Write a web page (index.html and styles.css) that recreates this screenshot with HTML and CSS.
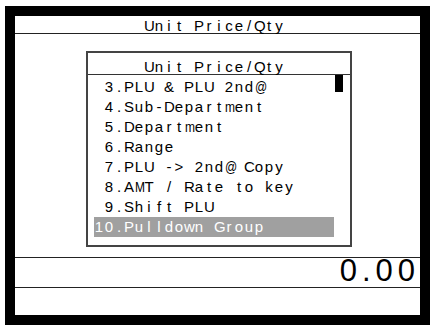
FILE: index.html
```html
<!DOCTYPE html>
<html>
<head>
<meta charset="utf-8">
<link rel="stylesheet" href="styles.css">
</head>
<body>
<div class="frame">
  <div class="title mono">Unit Price/Qty</div>
  <div class="middle">
    <div class="dialog">
      <div class="dlg-title mono">Unit Price/Qty</div>
      <div class="list">
        <div class="row mono"> 3.PLU &amp; PLU 2nd@</div>
        <div class="row mono"> 4.Sub-Department</div>
        <div class="row mono"> 5.Department</div>
        <div class="row mono"> 6.Range</div>
        <div class="row mono"> 7.PLU -&gt; 2nd@ Copy</div>
        <div class="row mono"> 8.AMT / Rate to key</div>
        <div class="row mono"> 9.Shift PLU</div>
        <div class="row mono selected">10.Pulldown Group</div>
      </div>
      <div class="scroll-thumb"></div>
    </div>
  </div>
  <div class="amount">0.00</div>
  <div class="status"></div>
</div>
<script src="script.js"></script>
</body>
</html>
```
FILE: styles.css
```css
html, body {
  margin: 0;
  padding: 0;
  background: #ffffff;
}
body {
  font-family: "Liberation Sans", Arial, sans-serif;
  color: #000000;
}
.frame {
  box-sizing: border-box;
  width: 425px;
  height: 319px;
  margin: 6px 0 0 5px;
  border: 10px solid #000000;
  display: flex;
  flex-direction: column;
  background: #ffffff;
}
.mono {
  font-size: 15px;
  white-space: pre;
}
.ch {
  display: inline-block;
  width: 10px;
  text-align: center;
}
.ch.wide {
  transform: scaleX(0.8);
}
.title {
  height: 14px;
  line-height: 14px;
  padding: 3px 0 0 129px;
  border-bottom: 1px solid #222222;
}
.middle {
  height: 224px;
  padding: 17px 0 0 71px;
  box-sizing: border-box;
  border-bottom: 1px solid #222222;
}
.dialog {
  position: relative;
  box-sizing: border-box;
  width: 266px;
  height: 196px;
  border: 2px solid #444444;
}
.dlg-title {
  box-sizing: border-box;
  height: 22px;
  line-height: 14px;
  padding: 7px 0 0 56px;
  border-bottom: 1px solid #333333;
}
.list {
  padding: 2px 0 0 6px;
}
.row {
  height: 20px;
  line-height: 20px;
}
.selected {
  width: 240px;
  background: #a0a0a0;
  color: #ffffff;
}
.scroll-thumb {
  position: absolute;
  left: 247px;
  top: 22px;
  width: 8px;
  height: 17px;
  background: #000000;
}
.amount {
  height: 29px;
  line-height: 25px;
  font-size: 31px;
  letter-spacing: 5px;
  text-align: right;
  border-bottom: 1px solid #222222;
  white-space: pre;
}
.status {
  flex: 1;
}
```
FILE: script.js
```js
document.querySelectorAll('.mono').forEach(function (el) {
  var text = el.textContent;
  el.textContent = '';
  for (var i = 0; i < text.length; i++) {
    var s = document.createElement('span');
    s.className = 'mMW@'.indexOf(text[i]) >= 0 ? 'ch wide' : 'ch';
    s.textContent = text[i];
    el.appendChild(s);
  }
});
```
